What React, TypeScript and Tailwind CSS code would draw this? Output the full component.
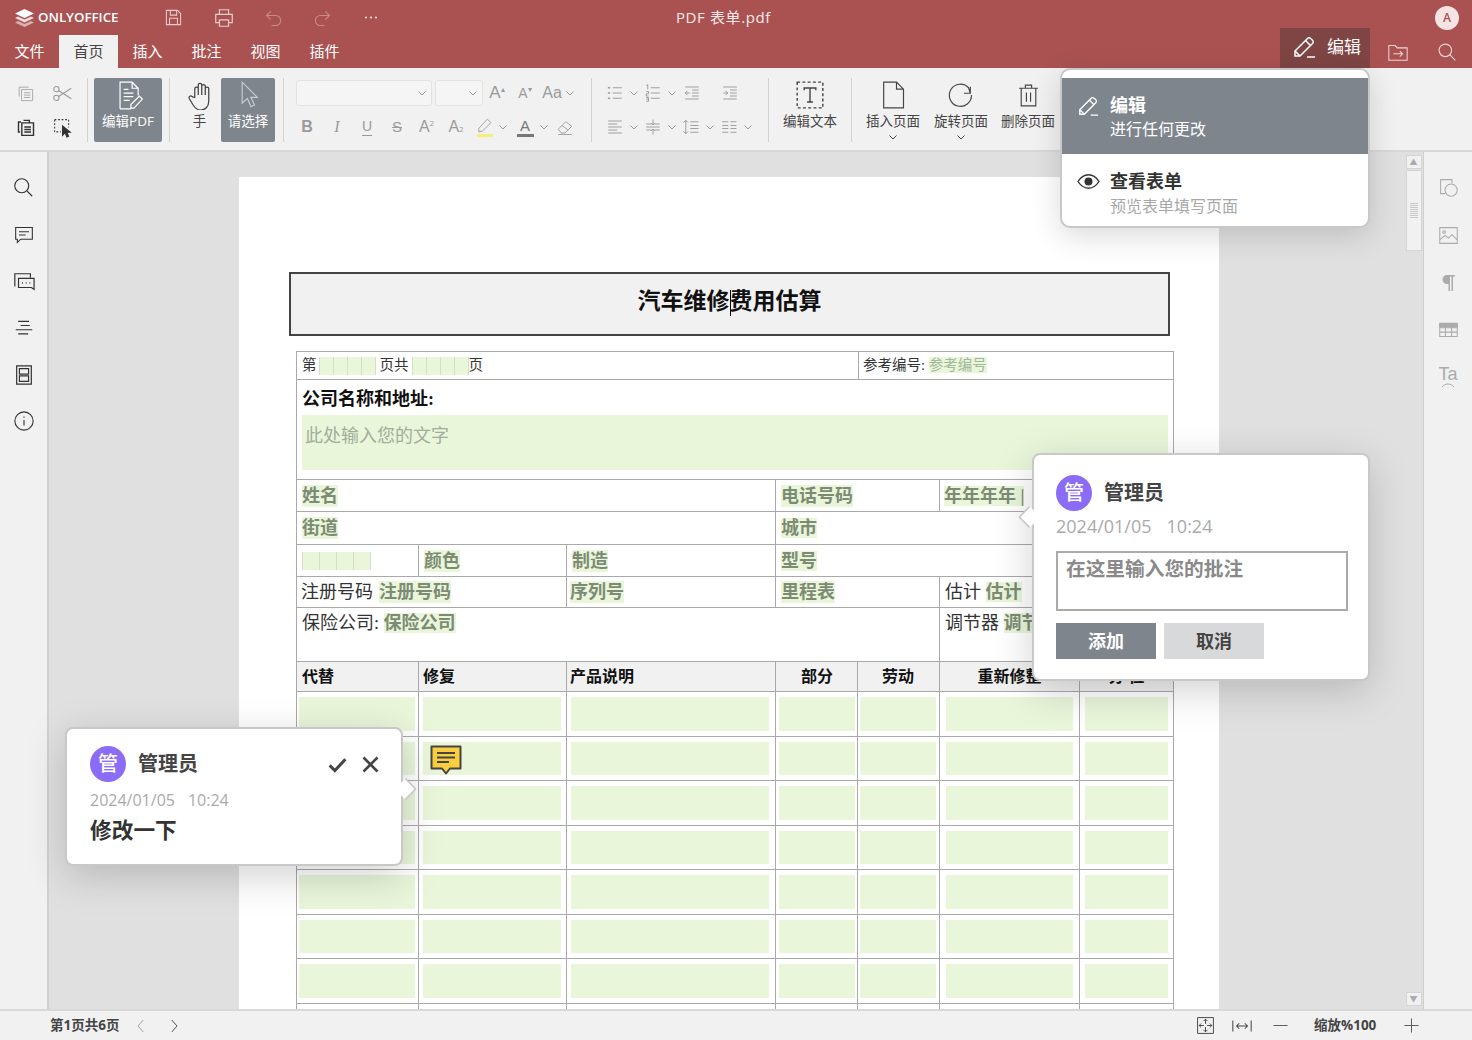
import type { ReactNode } from "react";

const Ic = ({ s = 20, cls = "", w = 1.2, children }: { s?: number; cls?: string; w?: number; children: ReactNode }) => (
  <svg width={s} height={s} viewBox="0 0 24 24" fill="none" stroke="currentColor" strokeWidth={w} className={cls}>
    {children}
  </svg>
);

const Chev = ({ cls = "text-[#9a9a9a]" }: { cls?: string }) => (
  <svg width="8" height="5" viewBox="0 0 8 5" fill="none" stroke="currentColor" strokeWidth="1" className={cls}>
    <path d="M.5.5 4 4 7.5.5" />
  </svg>
);

const Pen = ({ s = 24 }: { s?: number }) => (
  <Ic s={s} w={1.5}>
    <path d="M3 21v-5L15.500 3.500a2.200 2.200 0 0 1 3.200 0l1.800 1.800a2.200 2.200 0 0 1 0 3.200L8 21H3Z" />
    <path d="M13.500 5.500 18.500 10.500M3 16l5 5M15 22h8" />
  </Ic>
);

const Sep = () => <div className="mt-[10px] h-[64px] w-px shrink-0 bg-[#d2d2d2]" />;

const Cell = ({ w, children, cls = "" }: { w: string; children: ReactNode; cls?: string }) => (
  <div className={`flex h-[30px] shrink-0 items-center justify-center ${w} ${cls}`}>{children}</div>
);

const Big = ({ label, w, chev, children }: { label: string; w: string; chev?: boolean; children: ReactNode }) => (
  <div className={`mt-[10px] flex h-[64px] shrink-0 flex-col items-center ${w}`}>
    <div className="flex h-[34px] items-center justify-center text-[#444]">{children}</div>
    <span className="text-[13.5px] leading-[18px] whitespace-nowrap text-[#444]">{label}</span>
    {chev && <Chev cls="mt-[5px] text-[#444]" />}
  </div>
);

const Lines = ({ d }: { d: string }) => (
  <Ic s={18} w={1.1} cls="text-[#8d8d8d]">
    <path d={d} />
  </Ic>
);

const Letter = ({ children, cls = "" }: { children: ReactNode; cls?: string }) => (
  <span className={`font-['Liberation_Sans',sans-serif] text-[#9a9a9a] ${cls}`}>{children}</span>
);

function Toolbar() {
  return (
    <div className="flex h-[84px] shrink-0 border-b-2 border-[#d8d8d8] bg-[#f1f1f1]">
      <div className="mt-[10px] w-[87px] shrink-0 pl-[7px]">
        <div className="flex">
          <Cell w="w-[37px]">
            <Ic cls="text-[#a8a8a8]" s={19}>
              <path d="M4 16V4h12M7 7h14v14H7zM10 11h8M10 14h8M10 17h8" />
            </Ic>
          </Cell>
          <Cell w="w-[37px]">
            <Ic cls="text-[#9a9a9a]" s={21}>
              <circle cx="5" cy="7" r="3" />
              <circle cx="5" cy="17" r="3" />
              <path d="M7.500 8.500 22 18M7.500 15.500 22 6" />
            </Ic>
          </Cell>
        </div>
        <div className="mt-[4px] flex">
          <Cell w="w-[37px]">
            <Ic cls="text-[#333]" s={20} w={1.7}>
              <path d="M5 18H3V6h3M9 4h7v3M7 7h14v15H7zM10 12h8M10 15h8M10 18h8" />
            </Ic>
          </Cell>
          <Cell w="w-[37px]">
            <Ic cls="text-[#333]" s={21}>
              <path d="M3 3h16v9M3 3v14h7" strokeDasharray="2 2" />
              <path d="M12 10v11l3-3 2 5 2-1-2-4.500h4Z" fill="#333" />
            </Ic>
          </Cell>
        </div>
      </div>
      <Sep />
      <div className="mt-[10px] ml-[6px] flex h-[64px] w-[68px] shrink-0 flex-col items-center rounded-[2px] bg-[#7e858c] text-white">
        <div className="flex h-[34px] items-center">
          <Ic s={29} w={1}>
            <path d="M5 23V1h10l5 5v6M15 1v5h5M5 23h9M8 7h4M8 10h8M8 13h8M8 16h5" />
            <path d="M14 22.500v-3l7-7 2.500 2.500-7 7.500Z" />
          </Ic>
        </div>
        <span className="text-[13.5px] leading-[18px] whitespace-nowrap">编辑PDF</span>
      </div>
      <div className="ml-[7px]">
        <Sep />
      </div>
      <div className="ml-[8px] flex">
        <Big label="手" w="w-[43px]">
          <div className="ml-[2px]">
            <Ic s={30} w={1}>
              <path d="M7 14V7a1.400 1.400 0 0 1 2.800 0v5-8a1.400 1.400 0 0 1 2.800 0v8-7a1.400 1.400 0 0 1 2.800 0v7-5a1.400 1.400 0 0 1 2.800 0v10c0 4.500-3 7-6.500 7-3 0-4.500-1.500-6-4l-3-5c-1-2 1-3 2.500-1.500Z" />
            </Ic>
          </div>
        </Big>
        <div className="mt-[10px] flex h-[64px] w-[54px] shrink-0 flex-col items-center rounded-[2px] bg-[#7e858c] text-white">
          <div className="flex h-[34px] items-center text-[#c8ccd0]">
            <Ic s={28} w={1}>
              <path d="M7 1v18l4.500-4 3 7 3-1.500-3-6.500H20Z" />
            </Ic>
          </div>
          <span className="text-[13.5px] leading-[18px] whitespace-nowrap">请选择</span>
        </div>
      </div>
      <div className="ml-[8px]">
        <Sep />
      </div>

      <div className="mt-[10px] ml-[8px] w-[299px] shrink-0">
        <div className="flex h-[30px] items-center pl-[4px]">
          <div className="flex h-[26px] w-[136px] items-center justify-end rounded-[3px] border border-[#e2e2e2] bg-[#f5f5f5] pr-[5px]">
            <Chev />
          </div>
          <div className="ml-[3px] flex h-[26px] w-[48px] items-center justify-end rounded-[3px] border border-[#e2e2e2] bg-[#f5f5f5] pr-[5px]">
            <Chev />
          </div>
          <Cell w="w-[28px]">
            <Letter cls="text-[17px]">A</Letter>
            <sup className="text-[8px] text-[#9a9a9a]">▴</sup>
          </Cell>
          <Cell w="w-[28px]">
            <Letter cls="text-[14px]">A</Letter>
            <sup className="text-[8px] text-[#9a9a9a]">▾</sup>
          </Cell>
          <Cell w="w-[26px]">
            <Letter cls="text-[16px]">Aa</Letter>
          </Cell>
          <Cell w="w-[10px]">
            <Chev />
          </Cell>
        </div>
        <div className="mt-[4px] flex h-[30px] items-center">
          <Cell w="w-[30px]">
            <Letter cls="text-[16px] font-bold">B</Letter>
          </Cell>
          <Cell w="w-[30px]">
            <Letter cls="font-['Liberation_Serif',serif] text-[16px] italic">I</Letter>
          </Cell>
          <Cell w="w-[30px]">
            <Letter cls="border-b border-[#9a9a9a] text-[14px] leading-[17px]">U</Letter>
          </Cell>
          <Cell w="w-[30px]">
            <Letter cls="text-[15px] line-through">S</Letter>
          </Cell>
          <Cell w="w-[29px]">
            <Letter cls="text-[16px]">A</Letter>
            <sup className="text-[8px] text-[#9a9a9a]">2</sup>
          </Cell>
          <Cell w="w-[30px]">
            <Letter cls="text-[16px]">A</Letter>
            <sub className="text-[8px] text-[#9a9a9a]">2</sub>
          </Cell>
          <Cell w="w-[27px]">
            <div className="flex flex-col items-center text-[#9a9a9a]">
              <Ic s={17} w={1.2}>
                <path d="M4 21v-5L16 3l5 5L9 20Z" />
              </Ic>
              <div className="h-[3px] w-[16px] bg-[#f3f07a]" />
            </div>
          </Cell>
          <Cell w="w-[10px]">
            <Chev />
          </Cell>
          <Cell w="w-[28px]" cls="ml-[3px]">
            <div className="flex flex-col items-center">
              <Letter cls="text-[15px] leading-[16px] text-[#777]">A</Letter>
              <div className="h-[3px] w-[17px] bg-[#777]" />
            </div>
          </Cell>
          <Cell w="w-[10px]">
            <Chev />
          </Cell>
          <Cell w="w-[30px]" cls="ml-[1px]">
            <Ic s={18} cls="text-[#9a9a9a]">
              <path d="M3 15 13 5l8 6-9 9H7ZM8 10l8 6M3 22h18" />
            </Ic>
          </Cell>
        </div>
      </div>
      <Sep />

      <div className="mt-[10px] w-[176px] shrink-0 pl-[8px]">
        <div className="flex h-[30px] items-center">
          <Cell w="w-[29px]">
            <Lines d="M9 5h12M9 12h12M9 19h12M3 4.500h2v1H3zM3 11.500h2v1H3zM3 18.500h2v1H3z" />
          </Cell>
          <Cell w="w-[10px]">
            <Chev />
          </Cell>
          <Cell w="w-[28px]">
            <Lines d="M9 5h12M9 12h12M9 19h12M3 2l2-1v6M3 10h3v3H3v3h3M3 18h3v2H3m3 0v3H3" />
          </Cell>
          <Cell w="w-[10px]">
            <Chev />
          </Cell>
          <Cell w="w-[30px]">
            <Lines d="M3 4h18M12 8h9M12 12h9M12 16h9M3 20h18M9 12H3m3-3-3 3 3 3" />
          </Cell>
          <Cell w="w-[30px]" cls="ml-[8px]">
            <Lines d="M3 4h18M12 8h9M12 12h9M12 16h9M3 20h18M3 12h6m-3-3 3 3-3 3" />
          </Cell>
        </div>
        <div className="mt-[4px] flex h-[30px] items-center">
          <Cell w="w-[29px]">
            <Lines d="M3 4h18M3 8h12M3 12h18M3 16h12M3 20h18" />
          </Cell>
          <Cell w="w-[10px]">
            <Chev />
          </Cell>
          <Cell w="w-[28px]">
            <Lines d="M3 12h18M3 8h7M14 8h7M3 16h7M14 16h7M12 2v7m-2.500-2 2.500 2 2.500-2M12 22v-7m-2.500 2 2.500-2 2.500 2" />
          </Cell>
          <Cell w="w-[10px]">
            <Chev />
          </Cell>
          <Cell w="w-[28px]">
            <Lines d="M11 5h11M11 10h11M11 14h11M11 19h11M5 3v18M2 6l3-3 3 3M2 18l3 3 3-3" />
          </Cell>
          <Cell w="w-[10px]">
            <Chev />
          </Cell>
          <Cell w="w-[28px]">
            <Lines d="M3 5h8M3 10h8M3 14h8M3 19h8M14 5h8M14 10h8M14 14h8M14 19h8" />
          </Cell>
          <Cell w="w-[10px]">
            <Chev />
          </Cell>
        </div>
      </div>
      <Sep />

      <Big label="编辑文本" w="w-[82px]">
        <Ic s={28} w={1.2}>
          <path d="M1 1h22v22H1z" strokeDasharray="2.500 2" />
          <path d="M7 8V6h10v2M12 6v12M9.500 18h5" />
        </Ic>
      </Big>
      <Sep />
      <div className="ml-[7px] flex">
        <Big label="插入页面" w="w-[68px]" chev>
          <Ic s={28} w={1}>
            <path d="M4 1h11l6 6v16H4ZM15 1v6h6" />
          </Ic>
        </Big>
        <Big label="旋转页面" w="w-[68px]" chev>
          <Ic s={28} w={1}>
            <path d="M20 5v5.500h-5.500M21 12a9.500 9.500 0 1 1-2.500-6.200l1.500 4.700" />
          </Ic>
        </Big>
        <Big label="删除页面" w="w-[66px]">
          <Ic s={25} w={1.1}>
            <path d="M3 5h18M9 5V2h6v3M5 5v17h14V5M10 9v9M14 9v9" />
          </Ic>
        </Big>
      </div>
    </div>
  );
}

function Header() {
  const tabs = ["插入", "批注", "视图", "插件"];
  return (
    <div className="h-[68px] shrink-0 bg-[#aa5252] text-white">
      <div className="flex h-[35px] items-center">
        <div className="flex w-[155px] shrink-0 items-center pl-[15px]">
          <svg width="19" height="18" viewBox="0 0 19 18" fill="currentColor">
            <path d="M9.500 0 19 4.500 9.500 9 0 4.500Z" />
            <path d="M3 7.500 9.500 10.500 16 7.500 19 9 9.500 13.500 0 9Z" opacity=".8" />
            <path d="M3 12 9.500 15 16 12 19 13.500 9.500 18 0 13.500Z" opacity=".55" />
          </svg>
          <span className="ml-[4px] font-['Open_Sans',sans-serif] text-[13.3px] font-semibold">ONLYOFFICE</span>
        </div>
        <div className="flex items-center">
          <div className="flex w-[37px] justify-center text-[#e9cccc]">
            <Ic s={19} w={1.3}>
              <path d="M3 3h14l4 4v14H3ZM8 3v6h8V3M7 21v-8h10v8" />
            </Ic>
          </div>
          <div className="ml-[13px] flex w-[37px] justify-center text-[#e9cccc]">
            <Ic s={22} w={1.3}>
              <path d="M7 8V3h10v5M7 17H3V8h18v9h-4M7 14h10v7H7z" />
            </Ic>
          </div>
          <div className="ml-[13px] flex w-[37px] justify-center text-[#c98a8a]">
            <Ic s={20} w={1.3}>
              <path d="M8 4 3 9l5 5M3 9h11a6 6 0 0 1 0 12H9" />
            </Ic>
          </div>
          <div className="ml-[11px] flex w-[37px] justify-center text-[#c98a8a]">
            <Ic s={20} w={1.3}>
              <path d="m16 4 5 5-5 5M21 9H10a6 6 0 0 0 0 12h5" />
            </Ic>
          </div>
          <div className="ml-[12px] flex w-[37px] justify-center">
            <svg width="14" height="3" viewBox="0 0 14 3" fill="#f2dcdc">
              <circle cx="2" cy="1.500" r="1.100" />
              <circle cx="7" cy="1.500" r="1.100" />
              <circle cx="12" cy="1.500" r="1.100" />
            </svg>
          </div>
        </div>
        <span className="ml-[287px] text-[15px] tracking-[0.6px] whitespace-nowrap text-[#f7e9e9]">PDF 表单.pdf</span>
        <div className="mr-[13px] ml-auto flex h-[24px] w-[24px] items-center justify-center rounded-full bg-[#f6e4e4] text-[12px] font-semibold text-[#aa5252]">
          A
        </div>
      </div>
      <div className="flex h-[33px] items-end">
        <div className="flex h-[33px] w-[59px] items-center justify-center text-[15px]">文件</div>
        <div className="flex h-[33px] w-[59px] items-center justify-center bg-[#f1f1f1] text-[15px] text-[#444]">首页</div>
        {tabs.map((t) => (
          <div key={t} className="flex h-[33px] w-[59px] items-center justify-center text-[15px]">
            {t}
          </div>
        ))}
        <div className="ml-auto flex items-end">
          <div className="flex h-[40px] w-[90px] items-center gap-[11px] bg-[#7f4545] pb-[2px] pl-[12px]">
            <Pen />
            <span className="text-[17px] whitespace-nowrap">编辑</span>
          </div>
          <div className="ml-[16px] flex h-[33px] w-[24px] items-center justify-center text-[#edd5d5]">
            <Ic s={22} w={1.1}>
              <path d="M2 21V5h7l2 2.500h11V21ZM7 14h10m-3-3 3 3-3 3" />
            </Ic>
          </div>
          <div className="mr-[13px] ml-[25px] flex h-[33px] w-[24px] items-center justify-center text-[#edd5d5]">
            <Ic s={20} w={1.3}>
              <circle cx="10" cy="10" r="7.500" />
              <path d="m15.500 15.500 6.500 6.500" />
            </Ic>
          </div>
        </div>
      </div>
    </div>
  );
}

function Field({ children, cls = "" }: { children: ReactNode; cls?: string }) {
  return <span className={`bg-[#e9f6da] font-bold text-[#7d8b75] ${cls}`}>{children}</span>;
}

function Comb({ n, w, cls = "" }: { n: number; w: string; cls?: string }) {
  return (
    <span className={`inline-flex h-[18px] border-l border-[#d3dfc8] align-middle ${cls}`}>
      {Array.from({ length: n }).map((_, i) => (
        <span key={i} className={`h-[18px] border-r border-[#d3dfc8] bg-[#e9f6da] ${w}`} />
      ))}
    </span>
  );
}

const row = "flex border-b border-[#a9a9a9]";
const cell = "h-full shrink-0 border-r border-[#a9a9a9] px-[5px]";

function Form() {
  const cols = [
    "w-[122px] pr-[3px] pl-[2px]",
    "w-[148px] pr-[5px] pl-[4px]",
    "w-[209px] pr-[6px] pl-[4px]",
    "w-[82px] pr-[2px] pl-[3px]",
    "w-[82px] pr-[3px] pl-[2px]",
    "w-[140px] px-[6px]",
    "w-[92px] pr-[4px] pl-[5px]",
  ];
  const heads = ["代替", "修复", "产品说明", "部分", "劳动", "重新修整", "分 位"];
  return (
    <div className="ml-[57px] w-[878px] border border-[#a9a9a9] font-['Liberation_Serif','Noto_Sans_CJK_SC',serif] text-[#333]">
      <div className={`${row} h-[28px] items-center text-[14.5px]`}>
        <div className={`${cell} flex w-[562px] items-center`}>
          第<Comb n={4} w="w-[14px]" cls="ml-[2px]" />
          <span className="ml-[4px]">页共</span>
          <Comb n={4} w="w-[14px]" cls="ml-[3px]" />页
        </div>
        <div className="px-[4px]">
          参考编号: <span className="bg-[#e9f6da] text-[#a3b79a]">参考编号</span>
        </div>
      </div>
      <div className={`${row} h-[100px] flex-col px-[5px]`}>
        <div className="mt-[7px] text-[18px] leading-[24px] font-bold text-[#111]">公司名称和地址:</div>
        <div className="mt-[4px] h-[55px] w-[866px] bg-[#e9f6da] px-[3px] pt-[8px] text-[18px] leading-[26px] text-[#a3ad9c]">
          此处输入您的文字
        </div>
      </div>
      <div className={`${row} h-[32px] items-center text-[18px] leading-[22px]`}>
        <div className={`${cell} flex w-[479px] items-center`}>
          <Field>姓名</Field>
        </div>
        <div className={`${cell} flex w-[164px] items-center`}>
          <Field>电话号码</Field>
        </div>
        <div className="px-[4px] font-bold text-[#7d8b75]">
          <span className="bg-[#e9f6da]">年年年年 |</span>
        </div>
      </div>
      <div className={`${row} h-[33px] items-center text-[18px] leading-[22px]`}>
        <div className={`${cell} flex w-[479px] items-center`}>
          <Field>街道</Field>
        </div>
        <div className="px-[5px]">
          <Field>城市</Field>
        </div>
      </div>
      <div className={`${row} h-[32px] items-center text-[18px] leading-[22px]`}>
        <div className={`${cell} flex w-[122px] items-center`}>
          <Comb n={4} w="w-[17px]" />
        </div>
        <div className={`${cell} flex w-[148px] items-center`}>
          <Field>颜色</Field>
        </div>
        <div className={`${cell} flex w-[209px] items-center`}>
          <Field>制造</Field>
        </div>
        <div className="px-[5px]">
          <Field>型号</Field>
        </div>
      </div>
      <div className={`${row} h-[31px] items-center text-[18px] leading-[22px]`}>
        <div className={`${cell} flex w-[270px] items-center pl-[4px]`}>
          <span className="mr-[6px] whitespace-nowrap">注册号码</span>
          <Field cls="whitespace-nowrap">注册号码</Field>
        </div>
        <div className={`${cell} flex w-[209px] items-center pl-[3px]`}>
          <Field>序列号</Field>
        </div>
        <div className={`${cell} flex w-[164px] items-center`}>
          <Field>里程表</Field>
        </div>
        <div className="px-[5px] whitespace-nowrap">
          估计 <Field>估计</Field>
        </div>
      </div>
      <div className={`${row} h-[54px] text-[18px] leading-[22px]`}>
        <div className={`${cell} w-[643px] pt-[4px]`}>
          保险公司: <Field>保险公司</Field>
        </div>
        <div className="px-[5px] pt-[4px] whitespace-nowrap">
          调节器 <Field>调节器</Field>
        </div>
      </div>
      <div className={`${row} h-[30px] items-center bg-[#f1f1f1] text-[16px] leading-[20px] font-bold text-[#111]`}>
        {heads.map((h, i) => (
          <div
            key={h}
            className={`flex h-full items-center border-r border-[#a9a9a9] last:border-r-0 ${cols[i]} ${i < 3 ? "justify-start" : "justify-center"}`}
          >
            <span className={i === 0 ? "ml-[3px]" : i === 2 ? "-ml-[1px]" : ""}>{h}</span>
          </div>
        ))}
      </div>
      {Array.from({ length: 8 }).map((_, r) => (
        <div key={r} className={`${row} h-[44.5px]`}>
          {cols.map((c, i) => (
            <div key={i} className={`h-full border-r border-[#a9a9a9] py-[5px] last:border-r-0 ${c}`}>
              <div className="h-full bg-[#e9f6da]" />
            </div>
          ))}
        </div>
      ))}
    </div>
  );
}

function LeftRail() {
  return (
    <div className="flex w-[49px] shrink-0 flex-col items-center border-r-2 border-[#d0d0d0] bg-[#f1f1f1] pt-[12px] text-[#333]">
      <div className="flex h-[47px] items-center">
        <Ic s={21} w={1.3}>
          <circle cx="10" cy="10" r="8" />
          <path d="m16 16 6 6" />
        </Ic>
      </div>
      <div className="flex h-[47px] items-center">
        <Ic s={20} w={1.3}>
          <path d="M2 3h20v14H8l-4 4v-4H2ZM6 8h12M6 12h8" />
        </Ic>
      </div>
      <div className="flex h-[47px] items-center">
        <Ic s={22} w={1.3}>
          <path d="M2 17V3h17v4M6 8h17v12l-3-2H6Z" />
          <path d="M10 13h.8M14 13h.8M18 13h.8" strokeWidth="2" />
        </Ic>
      </div>
      <div className="flex h-[46px] items-center">
        <Ic s={20} w={1.3}>
          <path d="M5 4h13M8 9h11M2 14h20M5 19h12" />
        </Ic>
      </div>
      <div className="flex h-[47px] items-center">
        <Ic s={22} w={1.3}>
          <path d="M4 2h16v20H4ZM7 5h10v6H7ZM7 13h10v6H7Z" />
        </Ic>
      </div>
      <div className="flex h-[46px] items-center">
        <Ic s={22} w={1.2}>
          <circle cx="12" cy="12" r="10" />
          <path d="M12 11v6M12 7v1.500" />
        </Ic>
      </div>
    </div>
  );
}

function RightRail() {
  return (
    <div className="flex w-[49px] shrink-0 flex-col items-center border-l border-[#cfcfcf] bg-[#f1f1f1] pt-[12px] text-[#ababab]">
      <div className="flex h-[47px] items-center">
        <Ic s={21}>
          <path d="M8 19H3V3h13v4" />
          <circle cx="15" cy="15" r="7" />
        </Ic>
      </div>
      <div className="flex h-[48px] items-center">
        <Ic s={21}>
          <path d="M2 3h20v18H2ZM2 17l6-5 4 3 4-4 6 6" />
          <circle cx="7" cy="8" r="1.500" />
        </Ic>
      </div>
      <div className="flex h-[47px] items-center">
        <svg width="14" height="18" viewBox="0 0 14 18" fill="currentColor">
          <path d="M6 1H14V2.500H12V17H10.500V2.500H9V17H7.500V10H6A4.500 4.500 0 0 1 6 1Z" />
        </svg>
      </div>
      <div className="flex h-[46px] items-center">
        <Ic s={21}>
          <path d="M2 5h20v15H2ZM2 10h20M2 15h20M8.500 5v15M15.500 5v15" />
          <path d="M2 6h20v3H2Z" fill="currentColor" />
        </Ic>
      </div>
      <div className="flex h-[44px] flex-col items-center pt-[13px]">
        <span className="font-['Liberation_Sans',sans-serif] text-[18px] leading-[18px]">Ta</span>
        <svg width="14" height="4" viewBox="0 0 14 4" fill="none" stroke="currentColor">
          <path d="M1 4c3-4 9-4 12 0" />
        </svg>
      </div>
    </div>
  );
}

function Avatar() {
  return (
    <div className="flex h-[36px] w-[36px] shrink-0 items-center justify-center rounded-full bg-[#8a6cf7] text-[20px] font-medium text-white">
      管
    </div>
  );
}

function StatusBar() {
  return (
    <div className="flex h-[31px] shrink-0 items-center border-t-2 border-[#d8d8d8] bg-[#f1f1f1] text-[#444]">
      <span className="ml-[50px] w-[80px] text-[13.5px] font-bold whitespace-nowrap">第1页共6页</span>
      <div className="flex w-[22px] justify-center text-[#999]">
        <Ic s={18} w={1.2}>
          <path d="m15 4-7 8 7 8" />
        </Ic>
      </div>
      <div className="ml-[11px] flex w-[22px] justify-center">
        <Ic s={18} w={1.2}>
          <path d="m9 4 7 8-7 8" />
        </Ic>
      </div>
      <div className="ml-auto flex items-center">
        <Ic s={19} w={1.2}>
          <path d="M2 2h20v20H2ZM12 4v6m-2.500-3.500L12 4l2.500 2.500M12 20v-6m-2.500 3.500L12 20l2.500-2.500M4 12h6M6.500 9.500 4 12l2.500 2.500M20 12h-6m3.500-2.500L20 12l-2.500 2.500" />
        </Ic>
        <div className="ml-[16px]">
          <Ic s={22} w={1.1}>
            <path d="M2 6v12M22 6v12M6 12h12M9 9l-3 3 3 3M15 9l3 3-3 3" />
          </Ic>
        </div>
        <div className="ml-[19px]">
          <Ic s={17} w={1.2}>
            <path d="M2 12h20" />
          </Ic>
        </div>
        <span className="ml-[25px] w-[65px] text-[13.5px] font-bold whitespace-nowrap">缩放%100</span>
        <div className="mr-[52px] ml-[24px]">
          <Ic s={17} w={1.2}>
            <path d="M2 12h20M12 2v20" />
          </Ic>
        </div>
      </div>
    </div>
  );
}

export default function App() {
  return (
    <div className="relative flex h-[1040px] w-[1472px] flex-col overflow-hidden bg-[#e0e0e0] font-['Open_Sans','Noto_Sans_CJK_SC',sans-serif]">
      <Header />
      <Toolbar />
      <div className="flex min-h-0 flex-1">
        <LeftRail />
        <div className="min-w-0 flex-1 overflow-hidden pt-[25px] pl-[190px]">
          <div className="relative h-[1000px] w-[980px] bg-white pt-[95px]">
            <div className="mb-[15px] ml-[50px] flex h-[64px] w-[881px] items-center justify-center border-2 border-[#444] bg-[#f1f1f1] pb-[4px] font-['Liberation_Serif','Noto_Sans_CJK_SC',serif] text-[23px] font-bold text-[#111]">
              <span>
                汽车维修
                <span className="-mr-px inline-block h-[26px] w-px bg-black align-middle" />
                费用估算
              </span>
            </div>
            <Form />
            <div className="absolute top-[568px] left-[191px] flex h-[31px] w-[32px] items-start">
              <svg width="32" height="31" viewBox="0 0 32 31">
                <path d="M1.500 1.500H30.500V23.500H20L16 28.500 12 23.500H1.500Z" fill="#f9cf3f" stroke="#444" strokeWidth="2" strokeLinejoin="round" />
                <path d="M7 8H25M7 12.500H25M7 17H19" stroke="#444" strokeWidth="2" />
              </svg>
            </div>
          </div>
        </div>
        <div className="flex w-[19px] shrink-0 flex-col items-center pt-[3px] pb-[3px]">
          <div className="flex h-[14px] w-[16px] items-center justify-center border border-[#d4d4d4] bg-[#f1f1f1] text-[8px] leading-none text-[#aaa]">▲</div>
          <div className="mt-[1px] flex h-[81px] w-[16px] items-center justify-center border border-[#d4d4d4] bg-[#f1f1f1]">
            <div className="h-[16px] w-[8px] bg-[repeating-linear-gradient(#c8c8c8_0_1px,transparent_1px_2px)]" />
          </div>
          <div className="mt-auto flex h-[14px] w-[16px] items-center justify-center border border-[#d4d4d4] bg-[#f1f1f1] text-[8px] leading-none text-[#aaa]">▼</div>
        </div>
        <RightRail />
      </div>
      <StatusBar />

      {/* mode menu */}
      <div className="absolute top-[68px] left-[1060px] w-[310px] overflow-hidden rounded-[10px] border-2 border-[#c8c8c8] bg-white pt-[8px] shadow-[0_8px_30px_rgba(0,0,0,0.15)]">
        <div className="flex h-[76px] bg-[#7e858c] pt-[15px] pl-[15px] text-white">
          <div className="mt-[2px] w-[33px]">
            <Pen s={22} />
          </div>
          <div>
            <div className="text-[18px] leading-[24px] font-bold">编辑</div>
            <div className="text-[16px] leading-[24px]">进行任何更改</div>
          </div>
        </div>
        <div className="flex h-[72px] pt-[15px] pl-[15px]">
          <div className="mt-[1px] w-[33px] text-[#333]">
            <Ic s={23} w={1.4}>
              <path d="M1 12c3-4.500 7-7 11-7s8 2.500 11 7c-3 4.500-7 7-11 7s-8-2.500-11-7Z" />
              <circle cx="12" cy="12" r="3.500" fill="currentColor" />
            </Ic>
          </div>
          <div>
            <div className="text-[18px] leading-[24px] font-bold text-[#333]">查看表单</div>
            <div className="mt-[1px] text-[16px] leading-[24px] text-[#a8a8a8]">预览表单填写页面</div>
          </div>
        </div>
      </div>

      {/* new comment */}
      <div className="absolute top-[453px] left-[1032px] h-[228px] w-[338px] rounded-[8px] border-2 border-[#c8c8c8] bg-white px-[22px] pt-[20px] shadow-[0_10px_40px_rgba(0,0,0,0.18)]">
        <div className="absolute top-[54px] left-[-13px] h-[16px] w-[16px] rotate-45 rounded-bl-[3px] border-b-2 border-l-2 border-[#c8c8c8] bg-white" />
        <div className="flex items-center">
          <Avatar />
          <span className="ml-[12px] text-[20px] font-bold text-[#444]">管理员</span>
        </div>
        <div className="text-[18px] leading-[30px] text-[#aaa]">
          2024/01/05<span className="ml-[15px]">10:24</span>
        </div>
        <div className="mt-[10px] h-[60px] w-[292px] border-2 border-[#aaa] px-[8px] pt-[2px] text-[19.7px] leading-[28px] font-bold text-[#8a8a8a]">
          在这里输入您的批注
        </div>
        <div className="mt-[12px] flex gap-[8px]">
          <div className="flex h-[36px] w-[100px] items-center justify-center bg-[#7e858c] text-[18px] font-bold text-white">添加</div>
          <div className="flex h-[36px] w-[100px] items-center justify-center bg-[#d8d9db] text-[18px] font-bold text-[#444]">取消</div>
        </div>
      </div>

      {/* saved comment */}
      <div className="absolute top-[727px] left-[65px] h-[139px] w-[338px] rounded-[8px] border-2 border-[#c8c8c8] bg-white px-[23px] pt-[17px] shadow-[0_10px_40px_rgba(0,0,0,0.18)]">
        <div className="absolute top-[52px] right-[-13px] h-[16px] w-[16px] rotate-45 rounded-tr-[3px] border-t-2 border-r-2 border-[#c8c8c8] bg-white" />
        <div className="flex items-center">
          <Avatar />
          <span className="ml-[12px] text-[20px] font-bold text-[#444]">管理员</span>
          <div className="-mr-[3px] ml-auto flex items-center gap-[12px] text-[#444]">
            <Ic s={21} w={3.4}>
              <path d="m3 13 6 6L21 6" />
            </Ic>
            <Ic s={21} w={3}>
              <path d="M4 4l16 16M20 4 4 20" />
            </Ic>
          </div>
        </div>
        <div className="mt-[5px] text-[16px] leading-[26px] text-[#aaa]">
          2024/01/05<span className="ml-[13px]">10:24</span>
        </div>
        <div className="mt-[1px] text-[21.7px] leading-[32px] font-bold text-[#333]">修改一下</div>
      </div>
    </div>
  );
}
